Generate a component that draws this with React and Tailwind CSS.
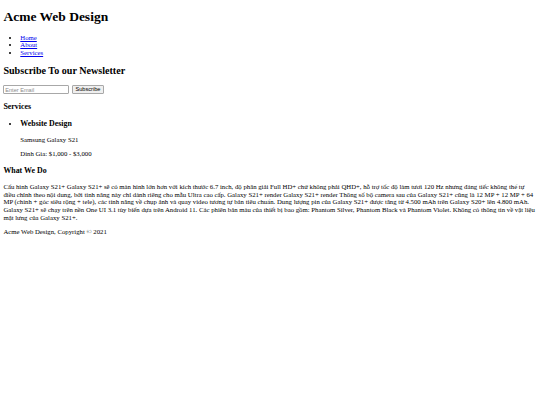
export default function App() {
    return (
        <div className="font-[family-name:'Liberation_Serif',serif] text-[6.75px] leading-[1.15] text-black bg-white min-h-[405px] px-[3.4px] pt-[9px]">
            <header>
                <h1 className="text-[13.5px] font-bold mb-[9px]">Acme Web Design</h1>
                <nav>
                    <ul className="list-disc pl-[16.9px] mb-[6.75px]">
                        <li><a href="#" className="text-[#0000ee] underline">Home</a></li>
                        <li><a href="#" className="text-[#0000ee] underline">About</a></li>
                        <li><a href="#" className="text-[#0000ee] underline">Services</a></li>
                    </ul>
                </nav>
            </header>

            <section>
                <h1 className="text-[10.1px] font-bold mt-[8.4px] mb-[8.4px]">Subscribe To our Newsletter</h1>
                <form className="flex items-center gap-[2.5px]" onSubmit={(e) => e.preventDefault()}>
                    <input
                        type="email"
                        placeholder="Enter Email"
                        className="font-[family-name:'Liberation_Sans',sans-serif] text-[5.6px] w-[66px] h-[8.9px] px-[0.9px] border border-[#a8a8a8] rounded-[1px] placeholder:text-[#8a8a8a] outline-none"
                    />
                    <button
                        type="submit"
                        className="font-[family-name:'Liberation_Sans',sans-serif] text-[5.6px] h-[8.9px] px-[2.6px] bg-[#efefef] border border-[#a8a8a8] rounded-[1px]"
                    >
                        Subscribe
                    </button>
                </form>
            </section>

            <aside>
                <h3 className="text-[7.9px] font-bold my-[7.9px]">Services</h3>
                <ul className="list-disc pl-[16.9px] my-[6.75px]">
                    <li>
                        <h3 className="text-[7.9px] font-bold my-[7.9px]">Website Design</h3>
                        <p className="my-[6.75px]">Samsung Galaxy S21</p>
                        <p className="my-[6.75px]">Dinh Gia: $1,000 - $3,000</p>
                    </li>
                </ul>
            </aside>

            <section>
                <h3 className="text-[7.9px] font-bold my-[7.9px]">What We Do</h3>
                <p className="my-[6.75px]">
                    Cấu hình Galaxy S21+ Galaxy S21+ sẽ có màn hình lớn hơn với kích thước 6.7 inch, độ phân giải Full HD+ chứ không phải QHD+, hỗ trợ tốc độ làm tươi 120 Hz nhưng đáng tiếc không thể tự điều chỉnh theo nội dung, bởi tính năng này chỉ dành riêng cho mẫu Ultra cao cấp. Galaxy S21+ render Galaxy S21+ render Thông số bộ camera sau của Galaxy S21+ cũng là 12 MP + 12 MP + 64 MP (chính + góc siêu rộng + tele), các tính năng về chụp ảnh và quay video tương tự bản tiêu chuẩn. Dung lượng pin của Galaxy S21+ được tăng từ 4.500 mAh trên Galaxy S20+ lên 4.800 mAh. Galaxy S21+ sẽ chạy trên nền One UI 3.1 tùy biến dựa trên Android 11. Các phiên bản màu của thiết bị bao gồm: Phantom Silver, Phantom Black và Phantom Violet. Không có thông tin về vật liệu mặt lưng của Galaxy S21+.
                </p>
            </section>

            <footer>
                <p className="my-[6.75px]">Acme Web Design, Copyright © 2021</p>
            </footer>
        </div>
    );
}
